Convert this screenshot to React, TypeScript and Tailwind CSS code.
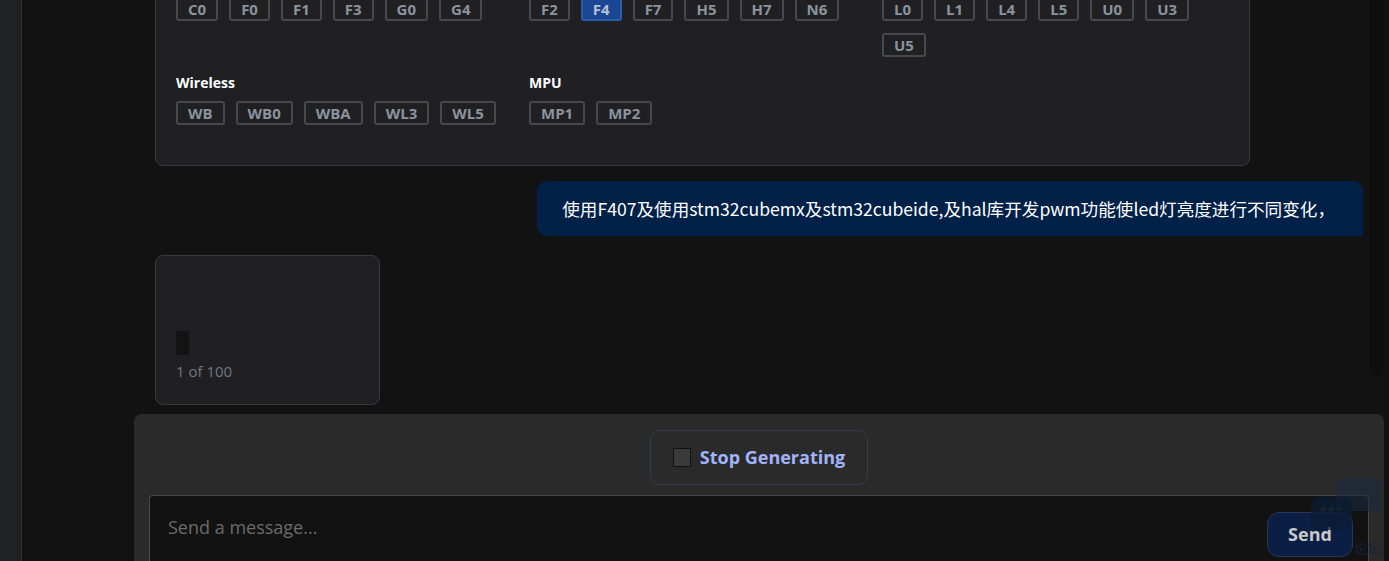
import React from "react";

type Group = { title: string; chips: string[] };

const groups: Group[] = [
  { title: "Mainstream", chips: ["C0", "F0", "F1", "F3", "G0", "G4"] },
  { title: "High Performance", chips: ["F2", "F4", "F7", "H5", "H7", "N6"] },
  { title: "Ultra Low Power", chips: ["L0", "L1", "L4", "L5", "U0", "U3", "U5"] },
  { title: "Wireless", chips: ["WB", "WB0", "WBA", "WL3", "WL5"] },
  { title: "MPU", chips: ["MP1", "MP2"] },
];

const selected = "F4";

function Chip({ label }: { label: string }) {
  const active = label === selected;
  return (
    <span
      className={
        active
          ? "h-6 px-[10px] rounded-[3px] border-2 border-[#2d5cab] bg-[#1b4693] text-[15px] font-bold leading-5 text-[#b4c1d4]"
          : "h-6 px-[10px] rounded-[3px] border-2 border-[#47484b] text-[15px] font-bold leading-5 text-[#8a939e]"
      }
    >
      {label}
    </span>
  );
}

function SeriesPanel() {
  return (
    <div className="-mt-[52px] w-[1095px] rounded-lg border border-[#38393c] bg-[#202022] px-5 pt-5 pb-[40px]">
      <div className="grid grid-cols-[347px_347px_347px] gap-x-[6px] gap-y-4">
        {groups.map((g) => (
          <div key={g.title}>
            <div className="mb-2 text-[14px] font-bold leading-5 text-white">{g.title}</div>
            <div className="flex flex-wrap gap-x-[11px] gap-y-3">
              {g.chips.map((c) => (
                <Chip key={c} label={c} />
              ))}
            </div>
          </div>
        ))}
      </div>
    </div>
  );
}

function ChatWidget() {
  return (
    <div className="pointer-events-none absolute right-0 bottom-[-4px] h-[90px] w-[80px]">
      <svg width="80" height="70" viewBox="0 0 80 70">
        <path d="M35 3h28a8 8 0 0 1 8 8v21l2 9-7-5H35a8 8 0 0 1-8-8V11a8 8 0 0 1 8-8z" fill="#1b2a3e" opacity="0.6" />
        <path d="M10 22h25a8 8 0 0 1 8 8v17a8 8 0 0 1-8 8H10a8 8 0 0 1-8-8V30a8 8 0 0 1 8-8z" fill="#0b1c33" opacity="0.75" />
        <circle cx="14" cy="34" r="2.5" fill="#16243a" />
        <circle cx="22" cy="34" r="2.5" fill="#16243a" />
        <circle cx="30" cy="34" r="2.5" fill="#16243a" />
      </svg>
      <div className="absolute right-[9px] bottom-[9px] text-[13px] leading-4 text-[#18253a]" style={{ fontFamily: '"Noto Sans CJK SC", sans-serif' }}>
        论坛
      </div>
    </div>
  );
}

export default function App() {
  return (
    <div className="flex h-[561px] w-[1389px] overflow-hidden bg-[#121212]" style={{ fontFamily: '"Open Sans", "Noto Sans CJK SC", sans-serif' }}>
      <aside className="w-[22px] shrink-0 border-r border-[#303134] bg-[#202124]" />
      <main className="relative flex min-w-0 flex-1 flex-col">
        <div className="absolute top-0 right-[6px] h-[376px] w-[13px] rounded-b-md bg-[#0e0e0e]" />
        <div className="flex h-[414px] shrink-0 flex-col overflow-hidden pl-[133px] pr-[26px]">
          <SeriesPanel />
          <div className="mt-[15px] self-end rounded-t-[10px] rounded-bl-[10px] bg-[#012149] pl-[25px] pr-[28px] pt-4 pb-[15px] text-[17.6px] leading-6 text-white" style={{ fontFamily: '"Noto Sans CJK SC", sans-serif' }}>
            使用F407及使用stm32cubemx及stm32cubeide,及hal库开发pwm功能使led灯亮度进行不同变化，
          </div>
          <div className="mt-[19px] h-[150px] w-[225px] shrink-0 rounded-lg border border-[#38393c] bg-[#202022] px-5 pt-[75px]">
            <div className="h-6 w-[13px] bg-[#131313]" />
            <div className="mt-[6px] text-[15px] leading-5 text-[#6f7784]">1 of 100</div>
          </div>
        </div>
        <footer className="ml-[112px] mr-[5px] flex flex-1 flex-col rounded-t-lg bg-[#2a2a2a] px-[15px] pt-4">
          <div className="flex justify-center">
            <button className="flex h-[55px] items-center gap-[9px] rounded-[10px] border border-[#343b55] px-[22px]">
              <span className="h-[19px] w-[18px] border border-[#111] bg-[#3a3a3a]" />
              <span className="text-[18px] font-bold text-[#a2b4f9]">Stop Generating</span>
            </button>
          </div>
          <div className="mt-[10px] flex flex-1 items-start justify-between rounded-t-[4px] border border-b-0 border-[#4a4a4a] bg-[#121212] pl-[18px] pr-[15px] pt-4">
            <span className="pt-[1px] text-[18px] leading-7 text-[#6b6b6b]">Send a message...</span>
            <button className="h-[45px] w-[86px] rounded-xl border border-[#2b3654] bg-[#0a1f43] text-[18px] font-bold text-[#c9c9c9]">
              Send
            </button>
          </div>
        </footer>
        <ChatWidget />
      </main>
    </div>
  );
}
